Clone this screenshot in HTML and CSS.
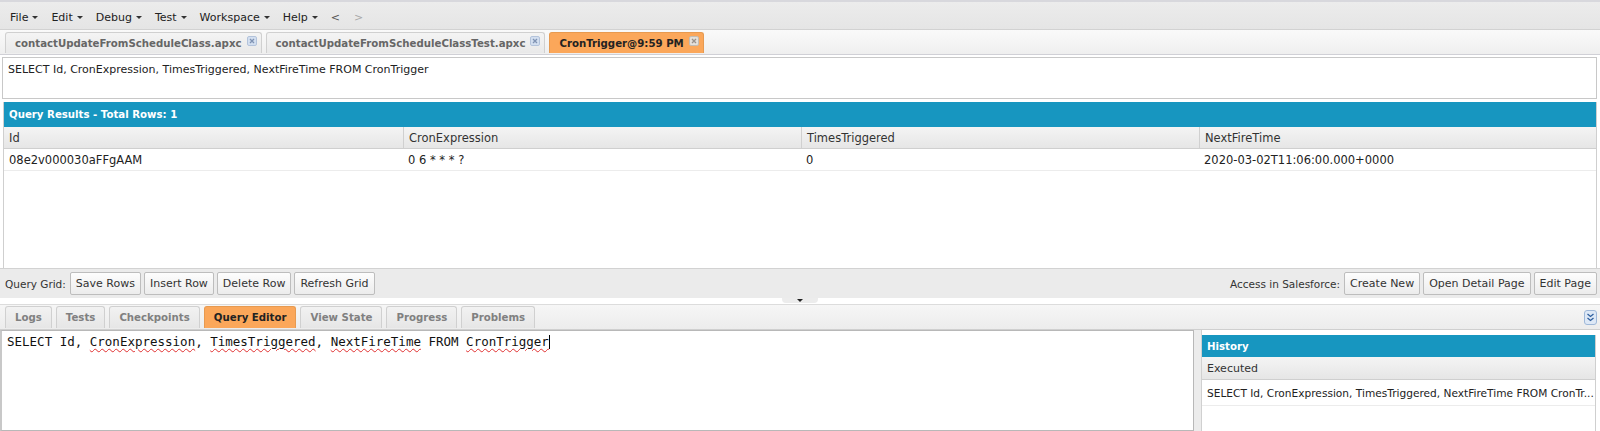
FILE: index.html
```html
<!DOCTYPE html>
<html lang="en">
<head>
  <meta charset="UTF-8" />
  <title>Developer Console</title>
  <link rel="stylesheet" href="styles.css">
</head>
<body>
  <div class="menubar">
    <span class="menu">File <i class="caret"></i></span>
    <span class="menu">Edit <i class="caret"></i></span>
    <span class="menu">Debug <i class="caret"></i></span>
    <span class="menu">Test <i class="caret"></i></span>
    <span class="menu">Workspace <i class="caret"></i></span>
    <span class="menu">Help <i class="caret"></i></span>
    <span class="nav">&lt;</span>
    <span class="nav off">&gt;</span>
  </div>

  <div class="filetabs">
    <div class="ftab">contactUpdateFromScheduleClass.apxc
      <svg class="close" width="10" height="10" viewBox="0 0 10 10"><rect x="0.5" y="0.5" width="9" height="9" rx="1.5" fill="#d3dff0" stroke="#b3c3db"/><path d="M3 3l4 4M7 3l-4 4" stroke="#7f93b3" stroke-width="1.3"/></svg>
    </div>
    <div class="ftab">contactUpdateFromScheduleClassTest.apxc
      <svg class="close" width="10" height="10" viewBox="0 0 10 10"><rect x="0.5" y="0.5" width="9" height="9" rx="1.5" fill="#d3dff0" stroke="#b3c3db"/><path d="M3 3l4 4M7 3l-4 4" stroke="#7f93b3" stroke-width="1.3"/></svg>
    </div>
    <div class="ftab active">CronTrigger@9:59 PM
      <svg class="close" width="10" height="10" viewBox="0 0 10 10"><rect x="0.5" y="0.5" width="9" height="9" rx="1.5" fill="#e4e0da" stroke="#c2bbb2"/><path d="M3 3l4 4M7 3l-4 4" stroke="#9a918a" stroke-width="1.3"/></svg>
    </div>
  </div>

  <div class="query-text">SELECT Id, CronExpression, TimesTriggered, NextFireTime FROM CronTrigger</div>

  <div class="results">
    <div class="panel-head">Query Results - Total Rows: 1</div>
    <div class="grid-row grid-head">
      <div class="cell">Id</div>
      <div class="cell">CronExpression</div>
      <div class="cell">TimesTriggered</div>
      <div class="cell">NextFireTime</div>
    </div>
    <div class="grid-row">
      <div class="cell">08e2v000030aFFgAAM</div>
      <div class="cell">0 6 * * * ?</div>
      <div class="cell">0</div>
      <div class="cell">2020-03-02T11:06:00.000+0000</div>
    </div>
  </div>

  <div class="gridbar">
    <div class="group">
      <span class="label">Query Grid:</span>
      <button class="btn">Save Rows</button>
      <button class="btn">Insert Row</button>
      <button class="btn">Delete Row</button>
      <button class="btn">Refresh Grid</button>
    </div>
    <div class="group">
      <span class="label">Access in Salesforce:</span>
      <button class="btn">Create New</button>
      <button class="btn">Open Detail Page</button>
      <button class="btn">Edit Page</button>
    </div>
  </div>

  <div class="splitter"><span class="grip"></span></div>

  <div class="paneltabs">
    <div class="ptabs">
      <div class="ptab">Logs</div>
      <div class="ptab">Tests</div>
      <div class="ptab">Checkpoints</div>
      <div class="ptab active">Query Editor</div>
      <div class="ptab">View State</div>
      <div class="ptab">Progress</div>
      <div class="ptab">Problems</div>
    </div>
    <svg class="collapse" width="13" height="15" viewBox="0 0 13 15"><rect x="0.5" y="0.5" width="12" height="14" rx="2.5" fill="#dde8f6" stroke="#9fb8d8"/><path d="M3.5 4l3 2.5 3-2.5M3.5 8l3 2.5 3-2.5" fill="none" stroke="#2f5f9e" stroke-width="1.3"/></svg>
  </div>

  <div class="workspace">
    <div class="editor">SELECT Id, <u>CronExpression</u>, <u>TimesTriggered</u>, <u>NextFireTime</u> FROM <u>CronTrigger</u><span class="cursor"></span></div>
    <div class="vsplit"></div>
    <div class="history">
      <div class="panel-head small">History</div>
      <div class="hist-head">Executed</div>
      <div class="hist-row">SELECT Id, CronExpression, TimesTriggered, NextFireTime FROM CronTr...</div>
    </div>
  </div>
</body>
</html>
```

FILE: styles.css
```css
* {
  box-sizing: border-box;
}
body {
  margin: 0;
  width: 1600px;
  height: 431px;
  overflow: hidden;
  background: #fff;
  font-family: "DejaVu Sans", Verdana, sans-serif;
  font-size: 11px;
  color: #222;
}
.menubar {
  height: 30px;
  border-top: 2px solid #d8d8dd;
  border-bottom: 1px solid #d2d2d2;
  background: linear-gradient(#ececec, #e5e5e5);
  display: flex;
  align-items: center;
  padding: 3px 0 0 10px;
}
.menu {
  margin-right: 13px;
  display: flex;
  align-items: center;
  gap: 4px;
}
.caret {
  display: inline-block;
  border-left: 3px solid transparent;
  border-right: 3px solid transparent;
  border-top: 3px solid #333;
}
.nav {
  color: #555;
  margin-right: 14px;
}
.nav.off {
  color: #aaa;
}
.filetabs {
  height: 25px;
  background: linear-gradient(#fafafa, #efefef);
  border-bottom: 1px solid #d0d0d6;
  display: flex;
  align-items: flex-end;
  padding: 0 0 1px 5px;
  gap: 4px;
}
.ftab {
  height: 21px;
  padding: 0 4px 0 9px;
  border: 1px solid #d0d0d0;
  border-bottom: none;
  border-radius: 3px 3px 0 0;
  background: linear-gradient(#f4f4f4, #e9e9e9);
  color: #666;
  font-size: 10.2px;
  font-weight: bold;
  display: flex;
  align-items: center;
  gap: 5px;
}
.ftab.active {
  background: #fba75a;
  color: #222;
  border-color: #e79a50;
}
.close {
  align-self: flex-start;
  margin-top: 3px;
}
.query-text {
  margin: 2px 3px 0 2px;
  height: 42px;
  border: 1px solid #c8c8c8;
  padding: 5px 5px;
}
.results {
  margin: 3px 3px 0 3px;
  height: 166px;
  border-left: 1px solid #cfcfcf;
  border-right: 1px solid #cfcfcf;
}
.panel-head {
  height: 25px;
  background: #1796c0;
  color: #fff;
  font-size: 10.2px;
  font-weight: bold;
  padding-left: 5px;
  display: flex;
  align-items: center;
}
.grid-row {
  display: grid;
  grid-template-columns: 399px 398px 398px 1fr;
  height: 22px;
  border-bottom: 1px solid #ececec;
  font-size: 11.5px;
}
.grid-head {
  background: linear-gradient(#f4f4f4, #e6e6e6);
  border-bottom: 1px solid #cfcfcf;
  color: #333;
}
.cell {
  padding-left: 5px;
  display: flex;
  align-items: center;
}
.grid-head .cell + .cell {
  border-left: 1px solid #d0d0d0;
}
.gridbar {
  height: 30px;
  background: #ebebeb;
  border-top: 1px solid #d2d2d2;
  display: flex;
  justify-content: space-between;
  align-items: center;
  padding: 0 3px 0 5px;
}
.group {
  display: flex;
  align-items: center;
  gap: 3px;
}
.label {
  color: #333;
  font-size: 10.5px;
  margin-right: 1px;
}
.btn {
  font: inherit;
  color: #333;
  height: 23px;
  padding: 0 5px;
  border: 1px solid #bdbdbd;
  border-radius: 2px;
  background: linear-gradient(#fdfdfd, #ececec);
}
.splitter {
  height: 6px;
  display: flex;
  justify-content: center;
}
.grip {
  width: 36px;
  height: 5px;
  background: #ececec;
  border-radius: 0 0 4px 4px;
  position: relative;
}
.grip::after {
  content: "";
  position: absolute;
  left: 15px;
  top: 1px;
  border-left: 3px solid transparent;
  border-right: 3px solid transparent;
  border-top: 3px solid #222;
}
.paneltabs {
  height: 26px;
  background: linear-gradient(#f6f6f6, #ececec);
  border-top: 1px solid #dcdcdc;
  border-bottom: 1px solid #cfcfcf;
  display: flex;
  justify-content: space-between;
  align-items: flex-end;
  padding: 0 3px 1px 5px;
}
.ptabs {
  display: flex;
  gap: 4px;
}
.ptab {
  height: 22px;
  padding: 0 9px;
  border: 1px solid #d0d0d0;
  border-bottom: none;
  border-radius: 3px 3px 0 0;
  background: linear-gradient(#f2f2f2, #e6e6e6);
  color: #808080;
  font-size: 10.2px;
  font-weight: bold;
  display: flex;
  align-items: center;
}
.ptab.active {
  background: #fba75a;
  border-color: #e79a50;
  color: #222;
}
.collapse {
  align-self: center;
  margin-top: 2px;
}
.workspace {
  display: flex;
  height: 101px;
  padding-right: 4px;
}
.editor {
  flex: 1;
  border: 1px solid #b8b8b8;
  border-left: 2px solid #c8c8c8;
  padding: 3px 5px;
  font-family: "DejaVu Sans Mono", monospace;
  font-size: 12.5px;
  color: #111;
  white-space: pre;
}
.editor u {
  text-decoration: underline wavy #e03030;
  text-decoration-thickness: 1px;
  text-underline-offset: 2px;
}
.cursor {
  display: inline-block;
  width: 1px;
  height: 14px;
  background: #000;
  vertical-align: -3px;
}
.vsplit {
  width: 8px;
  background: #ececec;
  border-right: 1px solid #d0d0d0;
}
.history {
  width: 394px;
  margin-top: 5px;
  border-right: 1px solid #cfcfcf;
}
.panel-head.small {
  height: 22px;
}
.hist-head {
  height: 23px;
  background: linear-gradient(#f4f4f4, #e6e6e6);
  border-bottom: 1px solid #cfcfcf;
  padding-left: 5px;
  display: flex;
  align-items: center;
  color: #333;
}
.hist-row {
  height: 26px;
  padding-left: 5px;
  line-height: 26px;
  white-space: nowrap;
  overflow: hidden;
  border-bottom: 1px solid #ececec;
  color: #222;
  font-size: 10.6px;
}
```
